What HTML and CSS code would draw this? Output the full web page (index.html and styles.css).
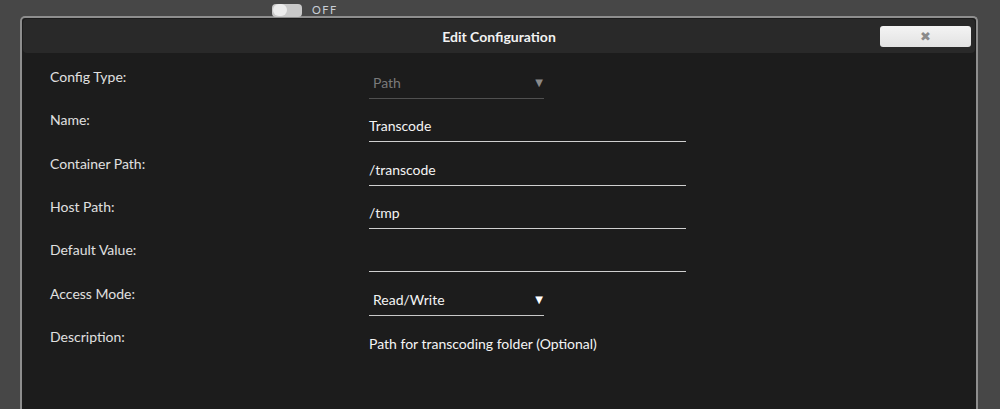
FILE: index.html
```html
<!DOCTYPE html>
<html>
<head>
<meta charset="utf-8">
<link rel="stylesheet" href="styles.css">
</head>
<body>
<div class="topbar">
  <span class="switch"><span class="knob"></span></span>
  <span class="switch-label">OFF</span>
</div>
<div class="dialog">
  <div class="dialog-head">
    <span class="title">Edit Configuration</span>
    <button class="close" type="button">&#x2716;</button>
  </div>
  <div class="dialog-body">
    <div class="form">
      <div class="row">
        <div class="label">Config Type:</div>
        <div class="field select disabled"><span class="val">Path</span><span class="arrow">&#9660;</span></div>
      </div>
      <div class="row">
        <div class="label">Name:</div>
        <div class="field text"><span class="val">Transcode</span></div>
      </div>
      <div class="row">
        <div class="label">Container Path:</div>
        <div class="field text"><span class="val">/transcode</span></div>
      </div>
      <div class="row">
        <div class="label">Host Path:</div>
        <div class="field text"><span class="val">/tmp</span></div>
      </div>
      <div class="row">
        <div class="label">Default Value:</div>
        <div class="field text"><span class="val"></span></div>
      </div>
      <div class="row">
        <div class="label">Access Mode:</div>
        <div class="field select"><span class="val">Read/Write</span><span class="arrow">&#9660;</span></div>
      </div>
      <div class="row">
        <div class="label">Description:</div>
        <div class="field plain"><span class="val">Path for transcoding folder (Optional)</span></div>
      </div>
    </div>
  </div>
</div>
</body>
</html>
```

FILE: styles.css
```css
* { box-sizing: border-box; }
html, body { margin: 0; padding: 0; }
body {
  background: #474747;
  font-family: Lato, "Open Sans", sans-serif;
  font-size: 14px;
  color: #e2e2e2;
  height: 409px;
  overflow: hidden;
}
.topbar {
  height: 16px;
  display: flex;
  align-items: center;
  padding-left: 272px;
  padding-top: 4px;
  gap: 10px;
}
.switch {
  width: 30px;
  height: 13px;
  border-radius: 4px;
  background: #c9c9c9;
  display: flex;
  align-items: center;
  padding-left: 1px;
}
.knob {
  width: 14px;
  height: 12px;
  border-radius: 6px;
  background: #ececec;
}
.switch-label {
  font-size: 11px;
  letter-spacing: 1.5px;
  color: #c9ced6;
  line-height: 12px;
}
.dialog {
  margin: 0 22px 0 20px;
  border: 2px solid #8e8e8e;
  border-bottom: none;
  border-radius: 5px 5px 0 0;
  background: #1c1c1c;
  height: 400px;
  padding: 1px 1px 0 1px;
}
.dialog-head {
  height: 34px;
  background: #292929;
  border-radius: 4px;
  display: flex;
  align-items: center;
  justify-content: center;
  position: relative;
}
.title {
  font-weight: bold;
  color: #f2f2f2;
  font-size: 14px;
}
.close {
  position: absolute;
  right: 4px;
  top: 7px;
  width: 91px;
  height: 21px;
  border: none;
  border-radius: 3px;
  background: linear-gradient(#f4f4f4, #e2e2e2);
  color: #8a8a8a;
  font-size: 13px;
  font-family: "DejaVu Sans", sans-serif;
  padding: 0;
  line-height: 21px;
}
.dialog-body {
  padding: 16px 0 0 27px;
}
.form {
  display: flex;
  flex-direction: column;
}
.row {
  display: grid;
  grid-template-columns: 319px 317px;
  height: 43.35px;
}
.label {
  line-height: 16px;
  color: #e0e0e0;
}
.field {
  height: 30px;
  display: flex;
  align-items: center;
  padding-bottom: 2px;
  color: #f4f4f4;
}
.field.text {
  border-bottom: 1px solid #cfcfcf;
}
.field.select {
  width: 175px;
  border-bottom: 1px solid #c8c8c8;
  padding-left: 4px;
  justify-content: space-between;
}
.field.select.disabled {
  border-bottom-color: #505050;
  color: #7a7a7a;
}
.arrow {
  font-size: 10px;
  font-family: "DejaVu Sans", sans-serif;
  padding-right: 1px;
  color: #ffffff;
}
.disabled .arrow {
  color: #8a8a8a;
}
.field.plain {
  align-items: center;
}
```
